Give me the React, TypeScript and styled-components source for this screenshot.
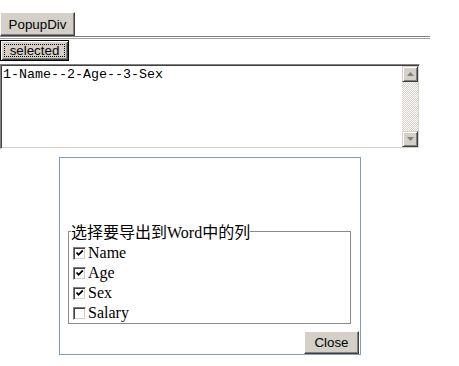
import React from 'react';
import styled, { createGlobalStyle } from 'styled-components';

const Global = createGlobalStyle`
  html, body { margin: 0; padding: 0; background: #fff; }
  body {
    font-family: "Liberation Serif", "Noto Sans CJK SC", serif;
    font-size: 16px;
    color: #000;
    overflow: hidden;
  }
`;

const Page = styled.div`
  position: relative;
  width: 459px;
  height: 366px;
  padding-top: 12px;
  box-sizing: border-box;
`;

const Btn = styled.button<{ $w: number; $h: number }>`
  display: flex;
  align-items: center;
  justify-content: center;
  box-sizing: border-box;
  width: ${(p) => p.$w}px;
  height: ${(p) => p.$h}px;
  margin: 0;
  padding: 0;
  font-family: "Liberation Sans", Arial, sans-serif;
  font-size: 13.33px;
  color: #000;
  background: #d4d0c8;
  border: 1px solid;
  border-color: #fff #404040 #404040 #fff;
  box-shadow: inset -1px -1px #808080, inset 1px 1px #d4d0c8;
  border-radius: 0;
`;

const DefaultBtn = styled(Btn)`
  border: 1px solid #000;
  box-shadow: inset 1px 1px #fff, inset -1px -1px #404040, inset 2px 2px #d4d0c8, inset -2px -2px #808080;
`;

const Focus = styled.span`
  display: flex;
  align-items: center;
  justify-content: center;
  box-sizing: border-box;
  width: calc(100% - 6px);
  height: calc(100% - 6px);
  border: 1px dotted #000;
`;

const Rule = styled.div`
  width: 430px;
  height: 1px;
  margin: 0 0 1px 0;
  border-top: 1px solid #808080;
  border-bottom: 1px solid #a0a0a0;
`;

const TextBox = styled.div`
  display: flex;
  box-sizing: border-box;
  width: 420px;
  height: 85px;
  margin-top: 3px;
  border: 1px solid;
  border-color: #808080 #fff #fff #808080;
  box-shadow: inset 1px 1px #404040, inset -1px -1px #d4d0c8;
  padding: 1px;
`;

const TextContent = styled.div`
  flex: 1;
  padding: 1px 1px;
  font-family: "Liberation Mono", "Courier New", monospace;
  font-size: 13.33px;
  line-height: 15px;
  white-space: pre;
`;

const ScrollBar = styled.div`
  display: flex;
  flex-direction: column;
  width: 16px;
  background: repeating-conic-gradient(#d4d0c8 0 25%, #fff 0 50%) 0 0 / 2px 2px;
`;

const ScrollBtn = styled.div`
  display: flex;
  align-items: center;
  justify-content: center;
  box-sizing: border-box;
  width: 16px;
  height: 16px;
  background: #d4d0c8;
  border: 1px solid;
  border-color: #d4d0c8 #404040 #404040 #d4d0c8;
  box-shadow: inset 1px 1px #fff, inset -1px -1px #808080;
`;

const Track = styled.div`
  flex: 1;
`;

const Popup = styled.div`
  position: absolute;
  left: 59px;
  top: 157px;
  width: 302px;
  height: 198px;
  box-sizing: border-box;
  border: 1px solid #7f9db9;
  background: #fff;
  display: flex;
  flex-direction: column;
  padding: 61px 1px 0 8px;
`;

const Fields = styled.fieldset`
  margin: 0 8px 0 0;
  padding: 0 4px 0 4px;
  border: 1px solid #8a8a8a;
  min-width: 0;
`;

const Legend = styled.legend`
  padding: 4px 0 0 0;
  margin-left: -2px;
  font-size: 16px;
  line-height: 20px;
  font-family: "Liberation Serif", "Noto Sans CJK SC", serif;
`;

const Latin = styled.span`
  font-family: "Liberation Serif", serif;
`;

const Row = styled.label`
  display: flex;
  align-items: center;
  height: 20px;
  font-size: 16px;
  line-height: 18px;
`;

const Box = styled.span`
  display: flex;
  align-items: center;
  justify-content: center;
  box-sizing: border-box;
  width: 13px;
  height: 13px;
  margin-right: 2px;
  background: #fff;
  border: 1px solid;
  border-color: #808080 #fff #fff #808080;
  box-shadow: inset 1px 1px #404040, inset -1px -1px #d4d0c8;
`;

const Actions = styled.div`
  display: flex;
  justify-content: flex-end;
  margin-top: 7px;
`;

const Arrow = ({ up }: { up?: boolean }) => (
  <svg width="7" height="4" viewBox="0 0 7 4">
    <path
      d={up ? 'M3.5 0 L7 4 L0 4 Z' : 'M0 0 L7 0 L3.5 4 Z'}
      fill="#808080"
    />
  </svg>
);

const Check = () => (
  <svg width="9" height="9" viewBox="0 0 9 9">
    <path d="M1.5 3.5 L3.5 5.8 L7.8 1.5" fill="none" stroke="#000" strokeWidth="1.8" />
  </svg>
);

const columns = [
  { name: 'Name', checked: true },
  { name: 'Age', checked: true },
  { name: 'Sex', checked: true },
  { name: 'Salary', checked: false },
];

export default function App() {
  return (
    <Page>
      <Global />
      <Btn $w={75} $h={24}>PopupDiv</Btn>
      <Rule />
      <DefaultBtn $w={69} $h={21}>
        <Focus>selected</Focus>
      </DefaultBtn>
      <TextBox>
        <TextContent>1-Name--2-Age--3-Sex</TextContent>
        <ScrollBar>
          <ScrollBtn><Arrow up /></ScrollBtn>
          <Track />
          <ScrollBtn><Arrow /></ScrollBtn>
        </ScrollBar>
      </TextBox>
      <Popup>
        <Fields>
          <Legend>选择要导出到<Latin>Word</Latin>中的列</Legend>
          {columns.map((c) => (
            <Row key={c.name}>
              <Box>{c.checked && <Check />}</Box>
              {c.name}
            </Row>
          ))}
        </Fields>
        <Actions>
          <Btn $w={55} $h={23}>Close</Btn>
        </Actions>
      </Popup>
    </Page>
  );
}
